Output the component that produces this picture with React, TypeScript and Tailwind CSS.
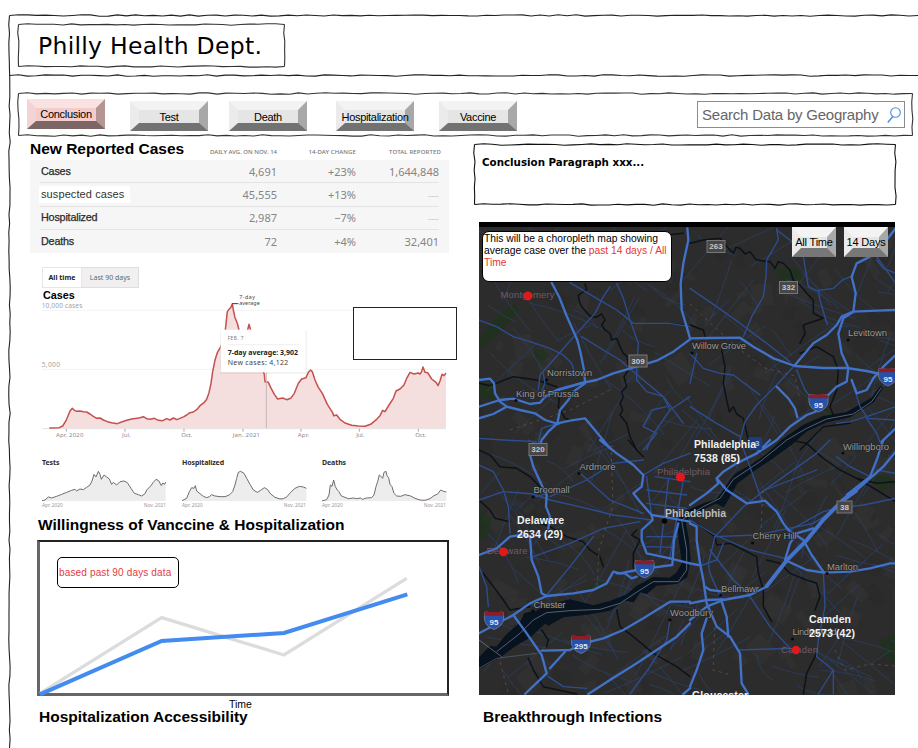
import React from "react";

const SANS = "font-['Liberation_Sans',Arial,sans-serif]";

/* Deterministic pseudo random numbers, for the hand-drawn strokes. */
function rng(seed: number) {
  let s = seed;
  return () => {
    s = (s * 16807) % 2147483647;
    return s / 2147483647;
  };
}

function wobble(x1: number, y1: number, x2: number, y2: number, seed: number) {
  const r = rng(seed);
  const len = Math.hypot(x2 - x1, y2 - y1);
  const n = Math.max(2, Math.round(len / 9));
  const horizontal = y1 === y2;
  let d = `M${x1} ${y1}`;
  for (let i = 1; i <= n; i++) {
    const t = i / n;
    const o = i === n ? 0 : (r() - 0.5) * 1.5;
    d += ` L${x1 + (x2 - x1) * t + (horizontal ? 0 : o)} ${y1 + (y2 - y1) * t + (horizontal ? o : 0)}`;
  }
  return d;
}

function SketchFrame({ w, h, seed, color = "#333" }: { w: number; h: number; seed: number; color?: string }) {
  return (
    <svg className="pointer-events-none absolute inset-0 overflow-visible" width={w} height={h} fill="none" stroke={color} strokeWidth="1.1">
      <path d={wobble(0.5, 0.5, w - 0.5, 0.5, seed)} />
      <path d={wobble(w - 0.5, 0.5, w - 0.5, h - 0.5, seed + 3)} />
      <path d={wobble(0.5, h - 0.5, w - 0.5, h - 0.5, seed + 7)} />
      <path d={wobble(0.5, 0.5, 0.5, h - 0.5, seed + 11)} />
    </svg>
  );
}

function NavButton({ label, className, active = false }: { label: string; className: string; active?: boolean }) {
  return (
    <button
      className={`${className} flex h-[30px] w-[78px] shrink-0 items-center justify-center border-t-[9px] border-r-[9px] border-b-[8px] border-l-[9px] text-[11px] leading-none tracking-[-0.3px] text-black ${
        active
          ? "border-t-[#fbe2e2] border-r-[#b59494] border-b-[#7c6565] border-l-[#f3d3d3] bg-[#f5cccc]"
          : "border-t-[#f3f3f3] border-r-[#a8a8a8] border-b-[#727272] border-l-[#ebebeb] bg-[#e5e5e5]"
      }`}
    >
      <span className={`whitespace-nowrap ${active ? "" : "pt-[2px]"}`}>{label}</span>
    </button>
  );
}

function MapButton({ label }: { label: string }) {
  return (
    <button className="flex h-[30px] w-[44px] items-center justify-center border-t-[10px] border-r-[9px] border-b-[9px] border-l-[9px] border-t-[#f3f3f3] border-r-[#a8a8a8] border-b-[#777] border-l-[#ebebeb] bg-[#e5e5e5] text-[11px] leading-none tracking-[-0.2px] text-black">
      <span className="whitespace-nowrap">{label}</span>
    </button>
  );
}

const rows = [
  ["Cases", "4,691", "+23%", "1,644,848"],
  ["suspected cases", "45,555", "+13%", "—"],
  ["Hospitalized", "2,987", "−7%", "—"],
  ["Deaths", "72", "+4%", "32,401"],
];

function CasesTable() {
  return (
    <div className="ml-[30px] h-[93px] w-[419px] bg-[#f6f6f6] pr-[10px] pl-[10px]">
      {rows.map(([name, avg, change, total], i) => (
        <div
          key={name}
          className={`grid h-[23.25px] grid-cols-[237px_79px_83px] items-center font-['Noto_Sans',sans-serif] text-[11px] leading-none text-[#858585] ${i < 3 ? "border-b border-[#e4e4e4]" : ""}`}
        >
          <div className="flex items-center justify-between">
            {i === 1 ? (
              <span className={`${SANS} -ml-[1px] h-[17px] w-[91px] bg-white pt-[3px] pl-[2px] text-[11px] tracking-[0.1px] text-[#333]`}>{name}</span>
            ) : (
              <span className={`${SANS} pl-[1px] text-[10.8px] tracking-[-0.2px] text-[#2a2a2a] [-webkit-text-stroke:0.25px_#2a2a2a]`}>{name}</span>
            )}
            <span>{avg}</span>
          </div>
          <span className="text-right">{change}</span>
          <span className={total === "—" ? "text-right text-[#d5d5d5]" : "text-right"}>{total}</span>
        </div>
      ))}
    </div>
  );
}

const cases =
  "88,519 118,518 128,513 138,497 150,468 157,460 163,466 170,469 180,468 190,470 200,471 210,477 220,484 230,490 240,489 250,495 262,500 275,503 292,506 305,501 320,496 335,492 350,490 360,488 370,485 380,491 392,493 403,490 415,496 428,497 440,491 450,495 460,489 470,494 480,490 492,485 500,480 510,473 520,471 530,464 540,452 552,443 560,433 567,413 573,385 578,350 585,315 592,293 603,274 610,255 616,225 622,170 627,163 632,158 637,146 640,165 645,188 652,205 657,225 670,250 680,240 683,225 687,208 692,225 705,290 733,358 735,380 745,382 752,397 763,418 773,432 788,429 800,434 812,430 823,415 835,385 845,372 858,368 865,352 872,345 877,350 885,375 895,397 907,415 922,448 938,473 941,482 950,480 960,493 975,504 995,511 1015,513 1035,514 1052,508 1070,493 1080,482 1088,466 1095,470 1107,450 1120,430 1128,408 1140,402 1152,390 1160,370 1170,352 1182,357 1195,354 1200,357 1205,350 1209,336 1215,352 1223,353 1235,372 1248,382 1254,392 1260,378 1266,358 1272,362 1278,354";

type Lab = [string, number, number, number];
const axis: Lab[] = [
  ["Apr. 2020", 108, 546, 82],
  ["Jul.", 306, 546, 26],
  ["Oct.", 484, 546, 32],
  ["Jan. 2021", 638, 546, 82],
  ["Apr.", 833, 546, 34],
  ["Jul.", 1009, 546, 24],
  ["Oct.", 1186, 546, 32],
];

function CasesChart() {
  return (
    <div className="relative ml-[36px] h-[143px] w-[424px]">
      <svg width="424" height="143" viewBox="36 302 424 143" className="block overflow-visible">
        <g transform="translate(20 255) scale(.33333)" fontFamily="Noto Sans, sans-serif">
          <path d="M66 166H1278M66 343H1278" stroke="#f0f0f0" strokeWidth="2.5" />
          <path d="M66 521H1278" stroke="#dcdcdc" strokeWidth="2.5" />
          <path d="M139 521v9M315 521v9M492 521v9M669 521v9M843 521v9M1018 521v9M1195 521v9" stroke="#aaa" strokeWidth="3" />
          <rect x="64" y="140" width="128" height="24" fill="#fff" />
          <polygon points={`88,520 ${cases} 1278,520`} fill="#f4dede" />
          <polyline points={cases} fill="none" stroke="#c5504d" strokeWidth="4.5" strokeLinejoin="round" />
          <path d="M739 352V520" stroke="#c9b5b5" strokeWidth="3" />
          <path d="M637 146H655" stroke="#333" strokeWidth="3" />
          <text x="65" y="159" fontSize="20" fill="#a2a2a2" textLength="122">10,000 cases</text>
          <text x="65" y="335" fontSize="20" fill="#a2a2a2" textLength="55">5,000</text>
          <g fontSize="16" fill="#444">
            <text x="658" y="132" textLength="47">7-day</text>
            <text x="658" y="151" textLength="61">average</text>
          </g>
          <g fontSize="18" fill="#8a8a8a">
            {axis.map(([t, x, y, w]) => (
              <text key={x} x={x} y={y + 1} textLength={w}>{t}</text>
            ))}
          </g>
          <rect x="600" y="227" width="260" height="129" fill="#00000012" />
          <rect x="602" y="224" width="255" height="128" fill="#fff" />
          <path d="M623 269H836" stroke="#e9e9e9" strokeWidth="2" />
          <text x="623" y="255" fontSize="14" fill="#777" textLength="47">FEB. 7</text>
          <text x="623" y="299" fontSize="21" fontWeight="700" fill="#222" textLength="211">7-day average: 3,902</text>
          <text x="623" y="329" fontSize="21" fill="#444" textLength="182">New cases: 4,122</text>
        </g>
      </svg>
      <div className="absolute top-[5px] left-[317px] h-[53px] w-[104px] border border-[#222] bg-white" />
    </div>
  );
}

const minis = [
  {
    name: "Tests",
    x: 42,
    pts: "66,167 75,165 85,156 95,159 110,154 125,148 140,142 155,136 165,133 170,138 180,132 190,134 200,127 210,120 216,108 222,88 228,96 235,79 240,88 244,103 252,90 260,96 268,102 275,118 280,112 290,120 300,110 312,108 322,113 333,130 343,145 355,149 365,153 375,146 380,135 392,123 400,112 408,103 416,107 424,122 428,114 434,118 437,111",
    a: 66,
    b: 437,
  },
  {
    name: "Hospitalized",
    x: 182,
    pts: "486,167 500,160 508,140 515,128 522,130 526,122 530,138 540,146 550,154 560,158 568,155 575,149 585,153 600,155 615,155 628,150 638,140 645,120 650,100 655,82 662,79 672,85 680,100 690,118 700,135 712,142 722,136 733,128 742,133 752,147 765,157 780,162 790,161 800,156 812,142 825,130 838,124 850,126 859,130",
    a: 486,
    b: 859,
  },
  {
    name: "Deaths",
    x: 322,
    pts: "905,168 920,164 927,150 931,120 936,124 941,105 946,125 952,135 957,140 963,152 972,156 985,161 1000,159 1010,161 1022,159 1027,163 1040,159 1055,158 1062,150 1068,125 1073,110 1078,90 1084,95 1088,100 1092,82 1098,79 1101,92 1106,98 1110,118 1116,125 1122,145 1130,153 1142,154 1155,149 1172,153 1185,160 1200,165 1215,166 1230,161 1242,152 1253,147 1262,135 1270,139 1279,141",
    a: 905,
    b: 1279,
  },
];

function MiniCharts() {
  return (
    <div className="mt-[11px] ml-[42px] flex h-[58px] gap-[14px]">
      {minis.map((m) => (
        <figure key={m.name} className="w-[126px] font-['Noto_Sans',sans-serif]">
          <h4 className="h-[12px] text-[7px] leading-[13px] font-bold tracking-[-0.1px] text-[#2b2b2b]">{m.name}</h4>
          <svg width="126" height="34" viewBox={`${m.x} 468 126 34`} className="block">
            <g transform="translate(20 445) scale(.33333)">
              <polygon points={`${m.a},168 ${m.pts} ${m.b},168`} fill="#ededed" />
              <polyline points={m.pts} fill="none" stroke="#6d6d6d" strokeWidth="3" strokeLinejoin="round" />
            </g>
          </svg>
          <figcaption className="flex justify-between pr-[2px] text-[4.8px] leading-[7px] text-[#999]">
            <span>Apr. 2020</span>
            <span>Nov. 2021</span>
          </figcaption>
        </figure>
      ))}
    </div>
  );
}

function WillingnessChart() {
  return (
    <div className="relative ml-[37px] h-[156px] w-[412px] border-t-2 border-r-2 border-b-3 border-l-3 border-t-[#222] border-r-[#222] border-b-[#666] border-l-[#666]">
      <svg width="407" height="151" viewBox="40 542 407 151" className="block overflow-visible">
        <g transform="translate(20 530) scale(.33333)" fill="none" strokeWidth="10">
          <polyline points="60,490 425,263 792,375 1160,145" stroke="#dcdcdc" />
          <polyline points="60,493 425,333 792,309 1162,193" stroke="#438bef" strokeWidth="12" />
        </g>
      </svg>
      <div className="absolute top-[15px] left-[17px] flex h-[31px] w-[122px] items-center rounded-[5px] border border-black bg-white pl-[1px] text-[10px] leading-none tracking-[0.15px] whitespace-nowrap text-[#e23b3f]">
        based past 90 days data
      </div>
    </div>
  );
}

/* Road geometry is kept per quadrant: nw, ne, sw, se. */
const quadrants = [
  {
    t: "translate(470 210) scale(.33333)",
    hw: [
      "245,218 268,262 290,318 322,390 332,430 342,480 345,515",
      "660,388 610,425 560,452 500,470 430,490 380,510 340,518 290,533 255,543",
      "340,518 260,540 225,560 210,578 180,582 130,566 90,570 27,590",
      "27,510 60,506 72,520 75,550 90,575 110,590 150,600 195,610 225,630 265,642",
      "345,520 310,545 295,570 270,600 262,640 235,665 215,690 205,720",
      "262,640 300,632 345,625 370,655 420,715",
      "27,625 70,612 110,590",
      "652,55 655,90 640,160 632,220 635,300 650,350 660,385",
    ],
    md: [
      "27,330 80,350 130,380 180,395 240,415 280,435 305,460 318,500",
      "300,218 380,265 440,300 490,340 600,340 660,350",
      "420,230 400,260 375,310 320,370 250,450 210,495 205,540",
      "440,220 460,265 480,330 505,400 500,470 500,510 530,545 580,560 600,600",
      "335,380 400,420 450,450 520,510 580,560 640,640",
      "27,685 100,690 200,695",
      "200,720 215,655 262,640",
      "520,720 560,670 520,650 545,600 590,590",
      "660,560 600,600 545,680 530,720",
      "220,490 225,520 215,545",
    ],
    cr: [
      "27,520 60,527 130,500 200,510 260,530 268,560 265,590 285,625 300,630",
      "345,222 350,238 325,256 328,275 335,290 360,318 378,322 395,312 405,330 395,345 405,360 420,370 425,390 440,385 450,410 460,430 472,440 475,480 462,500 470,530 455,545 460,560 450,580 458,600 450,615 470,640 480,680 500,720",
      "600,340 640,345",
      "590,75 640,70",
    ],
  },
  {
    t: "translate(690 210) scale(.33333)",
    hw: [
      "0,385 60,384 150,383 190,410 250,445 315,468 400,474 470,474 530,483 570,492 617,490",
      "617,300 560,302 490,305 455,320 440,345 410,375 370,400 315,465",
      "260,530 295,565 315,595 322,622",
      "390,600 350,615 300,650 260,690 230,710 200,730",
      "617,435 580,470 550,505 530,540 500,550 485,510",
      "490,305 460,325 445,370 455,430 475,474 470,515 440,530 410,560 385,595",
      "490,305 497,250 485,200 500,160 540,140 590,90 617,55",
      "617,655 575,695",
    ],
    md: [
      "315,465 260,525 200,585 165,635 150,690 140,720",
      "260,55 265,90 230,150 228,200 220,260 185,320 160,380",
      "260,60 300,90 340,140 350,200 355,230 380,242 430,235 460,208 490,198",
      "385,242 390,270 412,345",
      "0,235 80,290 150,340 230,400 300,455",
      "0,430 40,475 90,490 130,495 210,555",
      "320,480 345,540 360,560",
      "485,510 510,590 530,620 617,590",
      "530,625 560,670 580,720",
      "530,620 480,635 440,640",
      "0,590 80,640 150,680",
      "560,150 580,175 617,190",
      "560,140 617,220",
      "20,430 0,520",
      "530,625 617,630",
    ],
    cr: [
      "0,100 40,90 90,85 115,115 130,130 138,112 150,115 165,132 180,125 195,145 200,150 240,155 255,175 265,155 280,160 300,180 310,210 330,225 350,250 370,270 370,310 400,325 340,345 345,370 330,400",
      "330,430 380,410 430,440 445,480 440,540 420,590 430,615",
      "95,420 105,470 100,520 110,570 118,605 130,590 140,612 160,625 175,690",
      "0,345 40,360 45,380",
      "330,720 400,650 480,640",
    ],
  },
  {
    t: "translate(470 440) scale(.33333)",
    hw: [
      "180,45 190,80 215,135 230,165 228,200 240,230 235,265",
      "390,0 440,40 490,75 520,105 515,140 490,160 510,185 545,225 548,240 515,270 515,300 530,340 600,355 660,370",
      "545,225 590,232 660,245",
      "625,250 612,300 607,375 530,385",
      "500,390 450,400 430,395 410,430 370,450 310,460 230,468 180,490 130,525 27,580",
      "500,410 485,415 465,400 440,400",
      "27,345 80,325 120,290 150,285 180,290 185,360 205,410 215,460 230,468",
      "130,525 170,580 215,645 230,700 165,762",
      "215,632 300,630 340,610 400,595 460,570 520,535 600,485 660,485",
      "660,550 620,590 500,670 420,720 355,762",
      "285,635 240,685",
      "660,745 640,762",
    ],
    md: [
      "27,180 100,155 190,162 240,180 350,205 430,225 510,235 545,240",
      "27,75 70,95 100,150 115,200 120,280",
      "230,160 200,170 190,162",
      "330,100 420,180 520,220",
      "190,350 300,310 400,265 510,245",
      "235,710 280,740 350,745",
      "520,105 580,70 660,40",
      "240,170 350,120 430,70 520,60",
      "530,110 545,230",
      "595,120 570,340",
      "640,120 600,350",
      "530,290 620,290",
      "530,320 612,322",
      "555,110 660,125",
      "230,465 300,380 370,290",
      "27,380 50,440 55,500",
      "600,540 590,600 540,680 480,762",
      "175,0 215,20",
      "530,150 650,165",
      "530,190 650,205",
    ],
    cr: [
      "27,30 60,45 90,80 140,85 180,110 210,140",
      "27,180 60,210 75,235 120,245",
      "210,250 240,260 290,290 340,305 360,330 390,350 400,380",
      "500,270 485,285 510,300 490,340 490,390",
      "40,400 70,440 100,480 120,510 180,500",
      "440,510 450,560 490,590 550,640 620,680 660,710",
      "175,655 190,690 220,740 320,762",
      "475,0 500,30 520,50",
      "215,570 235,600 230,620",
    ],
  },
  {
    t: "translate(690 440) scale(.33333)",
    hw: [
      "0,195 50,160 85,130 80,115 100,95 140,70 200,40 240,0",
      "80,115 110,150 170,190 225,182 260,215 280,250 295,270 340,300 365,345 400,395",
      "617,35 580,80 500,150 460,180",
      "230,440 180,465 100,480 50,500 0,540",
      "580,0 560,60 540,110 470,165",
      "370,265 320,280 300,310 285,360 350,390 400,398 480,395 540,385 600,370 617,370",
      "0,250 20,260 20,300 30,370 40,420 50,490 80,560 120,590 150,640 155,730 175,762",
      "50,535 35,580 40,630 20,690 0,740",
      "0,370 25,375",
      "95,485 110,530 115,590",
      "0,490 50,480 100,478",
      "45,440 60,450 100,455",
    ],
    md: [
      "0,240 75,285 180,330 285,355",
      "75,290 200,285 370,250 440,205 520,195 617,175",
      "300,270 400,215 440,205",
      "75,290 55,370 60,400 95,480",
      "30,378 80,360 100,310",
      "400,395 405,500 385,600 380,650 430,690 430,762",
      "430,690 385,762",
      "145,630 300,625",
      "180,470 240,560 300,625",
      "440,50 480,80 540,110",
      "210,160 380,40 420,0",
      "75,290 160,200 225,150 380,90",
      "617,100 560,90",
      "60,330 130,420 180,465",
      "150,0 180,80 215,180",
    ],
    cr: [
      "75,290 80,315 120,310 170,335 200,350 205,400 220,450 220,500 245,545",
      "230,360 270,370 300,400 350,420 380,430 390,470 375,510",
      "300,0 350,10 400,55 450,90 500,115 560,150 617,185",
      "380,640 350,700 340,762",
      "20,250 75,290",
      "500,115 560,130 617,125",
    ],
  },
];

function streets() {
  const r = rng(4217);
  let d = "";
  for (let i = 0; i < 210; i++) {
    const x = 479 + r() * 416;
    const y = 230 + r() * 465;
    const a = (r() > 0.5 ? 0.62 : -0.85) + (r() - 0.5) * 0.9;
    const l = 25 + r() * 65;
    const k = (r() - 0.5) * 12;
    d += `M${x.toFixed(1)} ${y.toFixed(1)}q${((Math.cos(a) * l) / 2 + k).toFixed(1)} ${((Math.sin(a) * l) / 2 - k).toFixed(1)} ${(Math.cos(a) * l).toFixed(1)} ${(Math.sin(a) * l).toFixed(1)}`;
  }
  return d;
}

function blocks() {
  const r = rng(991);
  return Array.from({ length: 170 }, () => {
    const x = 479 + r() * 416;
    const y = 230 + r() * 465;
    return { x, y, w: 6 + r() * 22, h: 5 + r() * 18, dark: r() > 0.6, a: r() * 90 };
  });
}

function StateRoad({ x, y, n, w = 18 }: { x: number; y: number; n: string; w?: number }) {
  return (
    <g>
      <rect x={x - w / 2} y={y - 6} width={w} height="12" fill="#474747" stroke="#777" strokeWidth="1" />
      <text x={x} y={y + 2.9} textAnchor="middle" fontSize="8" fontWeight="700" fill="#c9c9c9">{n}</text>
    </g>
  );
}

function Interstate({ x, y, n }: { x: number; y: number; n: string }) {
  return (
    <g transform={`translate(${x} ${y})`}>
      <path d="M-9-8.5Q0-6.500 9-8.500Q11 0 7 4.500Q4 7.500 0 9Q-4 7.500-7 4.500Q-11 0-9-8.500Z" fill="#2551a8" stroke="#79828f" strokeWidth=".8" />
      <path d="M-9-8.500H9L9.600-4.700H-9.600Z" fill="#8c1c26" />
      <text x="0" y="4.500" textAnchor="middle" fontSize="8" fontWeight="700" fill="#dfe6f3">{n}</text>
    </g>
  );
}

const towns: Lab[] = [
  ["Norristown", 547, 376, 45],
  ["King of Prussia", 516, 397, 63],
  ["Willow Grove", 692, 349, 54],
  ["Levittown", 848, 336, 39],
  ["Willingboro", 843, 450, 46],
  ["Ardmore", 579.5, 469.5, 36],
  ["Broomall", 533.5, 493, 36],
  ["Chester", 533.5, 608, 32],
  ["Woodbury", 670, 616, 43],
  ["Bellmawr", 721, 592, 38],
  ["Cherry Hill", 752.5, 539, 44],
  ["Marlton", 827, 570, 31],
  ["Lindenwold", 792.5, 635, 44],
];

const counties: Lab[] = [
  ["Montgomery", 500.5, 298, 54],
  ["Philadelphia", 657, 475, 53],
  ["Delaware", 486.5, 554, 41],
  ["Camden", 781, 652.5, 37],
];

const dots = [
  [546.5, 380], [516, 400.5], [692, 353], [848, 340], [843, 453], [579, 473.5], [533, 497],
  [533, 611], [670, 620], [720.5, 595.5], [752.5, 543], [827, 573.5], [792.5, 639],
];

const stats: [string, string, number, number, number, number][] = [
  ["Philadelphia", "7538 (85)", 694, 448, 62, 46],
  ["Delaware", "2634 (29)", 517, 524, 47, 46],
  ["Camden", "2573 (42)", 809, 623, 42, 46],
];

const RIVER =
  "27,655 60,620 80,622 110,585 150,550 165,520 200,515 230,495 260,490 300,480 370,498 420,485 470,465 500,440 550,413 600,415 620,400 638,370 628,300 624,240 640,218 700,192 740,180 760,155 782,120 800,100 850,72 890,44 940,-2 1000,-43 1060,-70 1130,-82 1180,-110 1205,-125 1232,-160 1238,-158 1210,-115 1140,-70 1070,-55 1010,-28 962,14 910,52 850,92 800,130 775,175 760,200 740,188 700,206 655,232 645,245 655,300 660,360 650,410 620,430 560,435 530,460 510,455 490,485 465,480 420,510 350,522 280,530 235,555 225,548 180,590 130,620 90,650 27,685";

function CovidMap() {
  return (
    <svg width="416" height="473" viewBox="479 222 416 473" className="block" fontFamily="Liberation Sans, Arial, sans-serif">
      <rect x="479" y="222" width="416" height="473" fill="#2c2c2c" />
      {blocks().map((b, i) => (
        <rect key={i} x={b.x} y={b.y} width={b.w} height={b.h} fill={b.dark ? "#272828" : "#363636"} opacity=".45" transform={`rotate(${b.a} ${b.x} ${b.y})`} />
      ))}
      <g fill="#1d3518" opacity=".6">
        <path d="M479 338l20-24 16-10 4 6-16 20-24 20zM533 352l10-4 6 8-8 8zM479 380l14 4 2 16-16-2zM776 268l20 0 8 12-10 4-16-6zM868 478l20-4 7 10-12 8zM480 510l12 8-4 18-9 4zM880 640l15-6v30l-10-6zM820 405l14 8-6 6zM582 590l16-8 12-1-10 9z" />
      </g>
      <path d={streets()} fill="none" stroke="#2a4474" strokeWidth=".8" opacity=".75" />
      <g transform="translate(470 440) scale(.33333)">
        <polygon points={RIVER} fill="#081320" stroke="#081320" strokeWidth="4" strokeLinejoin="round" />
        <path
          d="M27 600L95 650M80 635L150 580 190 540 230 518 300 512 390 508 450 490 510 450 550 425 625 425 650 390 650 330 635 240 700 200 750 175 790 118 870 65 950 0 1010-35 1070-63 1150-78 1205-115 1235-158"
          fill="none"
          stroke="#7d8797"
          strokeWidth="2"
        />
        <path d="M27 685L80 655 200 640" fill="none" stroke="#5d6674" strokeWidth="2" />
      </g>
      {quadrants.map((q, i) => (
        <g key={i} transform={q.t} fill="none" strokeLinejoin="round" strokeLinecap="round">
          {q.cr.map((p) => (
            <polyline key={p} points={p} stroke="#0d1219" strokeWidth="4.5" />
          ))}
          {q.md.map((p) => (
            <polyline key={p} points={p} stroke="#2c4e91" strokeWidth="4" />
          ))}
          {q.hw.map((p) => (
            <polyline key={p} points={p} stroke="#4271c8" strokeWidth="7" />
          ))}
        </g>
      ))}
      <path d="M766 587L787 560 807 540 823 520 843 500 857 490" fill="none" stroke="#4472c8" strokeWidth="4" />
      <g fill="none" stroke="#6b5b50" strokeWidth=".8" strokeDasharray="3 4" opacity=".8">
        <path d="M690 304L735 346 765 368 795 376 800 400M611 445l2 60-14 45-2 40M835 650l10 20 25-6 25 2M763 490l-2 40M500 662l8 30M715 620l-2 50 18 5M510 430l60-20 40-20" />
      </g>
      <rect x="479" y="222" width="416" height="5" fill="#000" />

      <StateRoad x={716} y={246.5} n="263" />
      <StateRoad x={788.5} y={287.5} n="332" />
      <StateRoad x={638} y={361} n="309" />
      <StateRoad x={538} y={449.5} n="320" />
      <StateRoad x={844.5} y={507} n="38" w={15} />
      <g>
        <rect x="748" y="437" width="14" height="13" rx="2" fill="#1c3c80" />
        <text x="755" y="446" fontSize="8" fontWeight="700" fill="#a9bde6">3</text>
      </g>
      <Interstate x={888} y={377} n="95" />
      <Interstate x={818.5} y={403} n="95" />
      <Interstate x={644.5} y={569} n="95" />
      <Interstate x={494} y={620.5} n="95" />
      <Interstate x={581} y={644.5} n="295" />

      {dots.map(([x, y]) => (
        <circle key={`${x}-${y}`} cx={x} cy={y} r="1.6" fill="#0a0a0a" />
      ))}
      <circle cx="664.5" cy="521" r="2.8" fill="#050505" />
      <g fontSize="9.5" fill="#999" stroke="#222" strokeWidth="1.2" paintOrder="stroke">
        {towns.map(([t, x, y, w]) => (
          <text key={t} x={x} y={y} textLength={w}>{t}</text>
        ))}
      </g>
      <text x="665" y="517" fontSize="10.5" fontWeight="700" fill="#bcbcbc" textLength="61">Philadelphia</text>
      <g fontSize="9.5" fill="#6e5c68">
        {counties.map(([t, x, y, w]) => (
          <text key={t} x={x} y={y} textLength={w}>{t}</text>
        ))}
      </g>
      <g fill="#e0191c">
        <circle cx="528" cy="296" r="4.4" />
        <circle cx="680.5" cy="477" r="4.6" />
        <circle cx="503.5" cy="552" r="4.4" />
        <circle cx="796" cy="650" r="4.2" />
      </g>
      <g fontSize="10.5" fontWeight="700" fill="#f2f2f2">
        {stats.map(([a, b, x, y, wa, wb]) => (
          <React.Fragment key={a}>
            <text x={x} y={y} textLength={wa}>{a}</text>
            <text x={x} y={y + 13.5} textLength={wb}>{b}</text>
          </React.Fragment>
        ))}
        <text x="692" y="698.5" textLength="56">Gloucester</text>
      </g>
    </svg>
  );
}

export default function App() {
  return (
    <div className={`${SANS} relative h-[748px] w-[918px] overflow-hidden bg-white pt-[15px] text-black`}>
      <svg className="pointer-events-none absolute inset-0" width="918" height="748" fill="none" stroke="#222" strokeWidth="1.1">
        <path d={wobble(9.5, 15.5, 918, 15.5, 31)} />
        <path d={wobble(9.5, 15.5, 9.5, 748, 57)} />
        <path d={wobble(9.5, 75.5, 918, 75.5, 83)} />
      </svg>

      <header className="h-[60px] pt-[9px] pl-[18px]">
        <div className="relative flex h-[43px] w-[267px] items-center pt-[2px] pl-[20px]">
          <SketchFrame w={267} h={43} seed={101} />
          <h1 className="font-['DejaVu_Sans',Verdana,sans-serif] text-[23.5px] leading-none tracking-[0.28px] whitespace-nowrap">Philly Health Dept.</h1>
        </div>
      </header>

      <nav className="relative mt-[18px] ml-[18px] flex h-[43px] w-[895px] items-start">
        <SketchFrame w={895} h={43} seed={211} />
        <NavButton active label="Conclusion" className="mt-[6px] ml-[9px]" />
        <NavButton label="Test" className="mt-[8px] ml-[25px]" />
        <NavButton label="Death" className="mt-[8px] ml-[21px]" />
        <NavButton label="Hospitalization" className="mt-[8px] ml-[29px]" />
        <NavButton label="Vaccine" className="mt-[8px] ml-[25px]" />
        <label className="mt-[8px] mr-[8px] ml-auto flex h-[27px] w-[208px] items-center justify-between border border-[#8c8c8c] pr-[3px] pl-[4px] text-[15px] leading-none whitespace-nowrap text-[#666]">
          <span className="tracking-[-0.22px]">Search Data by Geography</span>
          <svg width="14" height="16" viewBox="0 0 14 16" fill="none" stroke="#4a8fe2" strokeWidth="1.1">
            <circle cx="8.5" cy="5.5" r="4.8" />
            <path d="M5.800 9.500L.8 15.500" strokeWidth="1.500" />
          </svg>
        </label>
      </nav>

      <main className="flex">
        <section className="w-[474px]">
          <div className="flex h-[24px] items-center pl-[30px]">
            <h2 className="w-[178px] pt-[2px] text-[15.5px] leading-none font-bold whitespace-nowrap">New Reported Cases</h2>
            <div className="grid grid-cols-[69px_79px_85px] pt-[8px] text-right font-['Noto_Sans',sans-serif] text-[6px] leading-none font-medium whitespace-nowrap text-[#777]">
              <span>DAILY AVG. ON NOV. 14</span>
              <span className="tracking-[0.1px]">14-DAY CHANGE</span>
              <span className="tracking-[0.15px]">TOTAL REPORTED</span>
            </div>
          </div>
          <CasesTable />
          <div className="mt-[14px] ml-[42px] flex h-[21px] w-[97px] font-['Noto_Sans',sans-serif] text-[7px] leading-none">
            <button className="w-[40px] border border-[#e6e6e6] bg-white font-bold text-[#222]">All time</button>
            <button className="w-[57px] border-y border-r border-[#dedede] bg-[#f0f0f0] text-[#666]">Last 90 days</button>
          </div>
          <h3 className="ml-[43px] h-[14px] pt-[2px] text-[10.8px] leading-none font-bold">Cases</h3>
          <CasesChart />
          <MiniCharts />
          <h2 className="ml-[38px] h-[26px] pt-[2px] text-[15.5px] leading-[17px] font-bold whitespace-nowrap">
            Willingness of Vanccine &amp; Hospitalization
          </h2>
          <WillingnessChart />
          <p className="mt-[2px] ml-[229px] h-[10px] text-[10.5px] leading-[13px]">Time</p>
          <h2 className="ml-[39px] text-[15.5px] leading-[17px] font-bold whitespace-nowrap">Hospitalization Accessibility</h2>
        </section>

        <section className="w-[444px]">
          <div className="relative mt-[8px] h-[61px] w-[422px] pt-[12px] pl-[8px]">
            <SketchFrame w={422} h={61} seed={307} color="#111" />
            <p className="font-['DejaVu_Sans',Verdana,sans-serif] text-[10.3px] leading-[13px] font-bold">Conclusion Paragraph xxx...</p>
          </div>
          <div className="relative mt-[17px] ml-[5px] h-[473px] w-[416px]">
            <CovidMap />
            <p className="absolute top-[9px] left-[3px] h-[51px] w-[190px] rounded-[7px] border border-black bg-white pt-[1px] pl-[1px] text-[10.3px] leading-[12px] whitespace-nowrap">
              This will be a choropleth map showing
              <br />
              average case over the <span className="text-[#e8363a]">past 14 days / All<br />Time</span>
            </p>
            <div className="absolute top-[5px] right-[7px] flex gap-[8px]">
              <MapButton label="All Time" />
              <MapButton label="14 Days" />
            </div>
          </div>
          <h2 className="mt-[13px] ml-[9px] text-[15.5px] leading-[17px] font-bold whitespace-nowrap">Breakthrough Infections</h2>
        </section>
      </main>
    </div>
  );
}
